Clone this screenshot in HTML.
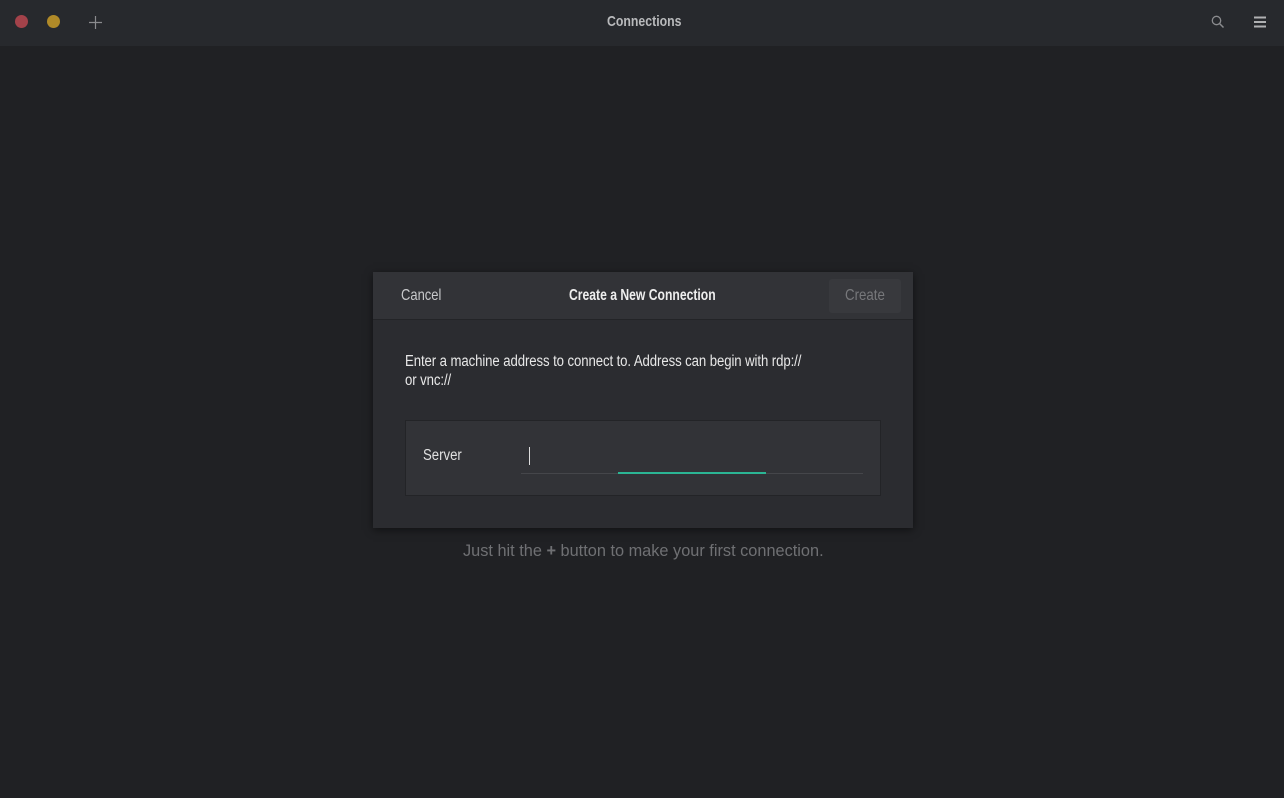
<!DOCTYPE html>
<html><head><meta charset="utf-8"><style>
*{margin:0;padding:0;box-sizing:border-box}
body{width:1284px;height:798px;background:#202124;font-family:"Liberation Sans",sans-serif;position:relative;overflow:hidden;color:#e6e6e6}
.tb{position:absolute;left:0;top:0;width:1284px;height:46px;background:#27292d}
.dot{position:absolute;top:15px;width:13px;height:13px;border-radius:50%}
.t{position:absolute;white-space:nowrap;transform-origin:left center}
.dlg{position:absolute;left:373px;top:272px;width:540px;height:256px;background:#2b2c30;box-shadow:0 2px 8px rgba(0,0,0,.5)}
.hd{position:absolute;left:0;top:0;width:540px;height:48px;background:#323337;border-bottom:1px solid #232427}
.btn{position:absolute;left:456px;top:7px;width:72px;height:34px;background:#38393d;border-radius:3px}
.box{position:absolute;left:32px;top:148px;width:476px;height:76px;background:#323337;border:1px solid #232427}
</style></head><body>
<div class="tb">
 <div class="dot" style="left:15px;background:#a3424a"></div>
 <div class="dot" style="left:47px;background:#b08a28"></div>
 <svg style="position:absolute;left:89px;top:16px" width="13" height="13"><path d="M6.5 0V13M0 6.5H13" stroke="#8a8b8e" stroke-width="1.2"/></svg>
 <div class="t" style="left:607px;top:13px;font-size:15px;font-weight:bold;color:#b9babc;transform:scaleX(.82)">Connections</div>
 <svg style="position:absolute;left:1211px;top:15px" width="14" height="14"><circle cx="5.5" cy="5.5" r="4.2" fill="none" stroke="#8a8b8e" stroke-width="1.3"/><path d="M8.5 8.5L12.5 12.5" stroke="#8a8b8e" stroke-width="1.5"/></svg>
 <svg style="position:absolute;left:1254px;top:16px" width="12" height="12"><path d="M0 1.5H12M0 6H12M0 10.5H12" stroke="#b0b1b3" stroke-width="2"/></svg>
</div>
<div class="t" style="left:463px;top:541px;font-size:17px;color:#6f7073;transform:scaleX(.96)">Just hit the <b>+</b> button to make your first connection.</div>
<div class="dlg">
 <div class="hd">
  <div class="t" style="left:28px;top:15px;font-size:16px;color:#c8c9cb;transform:scaleX(.81)">Cancel</div>
  <div class="t" style="left:196px;top:15px;font-size:16px;font-weight:bold;color:#eeeeee;transform:scaleX(.76)">Create a New Connection</div>
  <div class="btn"></div>
  <div class="t" style="left:472px;top:15px;font-size:16px;color:#77787b;transform:scaleX(.83)">Create</div>
 </div>
 <div class="t" style="left:32px;top:80px;font-size:15.5px;color:#e8e8e8;line-height:19px;transform:scaleX(.85);letter-spacing:-.1px">Enter a machine address to connect to. Address can begin with rdp://<br>or vnc://</div>
 <div class="box">
  <div class="t" style="left:17px;top:26px;font-size:15.5px;color:#e0e0e0;transform:scaleX(.85)">Server</div>
  <div style="position:absolute;left:123px;top:26px;width:1px;height:18px;background:#ddd"></div>
  <div style="position:absolute;left:115px;top:52px;width:342px;height:1px;background:#45464a"></div>
  <div style="position:absolute;left:212px;top:51px;width:148px;height:2px;background:#2bb594"></div>
 </div>
</div>
</body></html>
